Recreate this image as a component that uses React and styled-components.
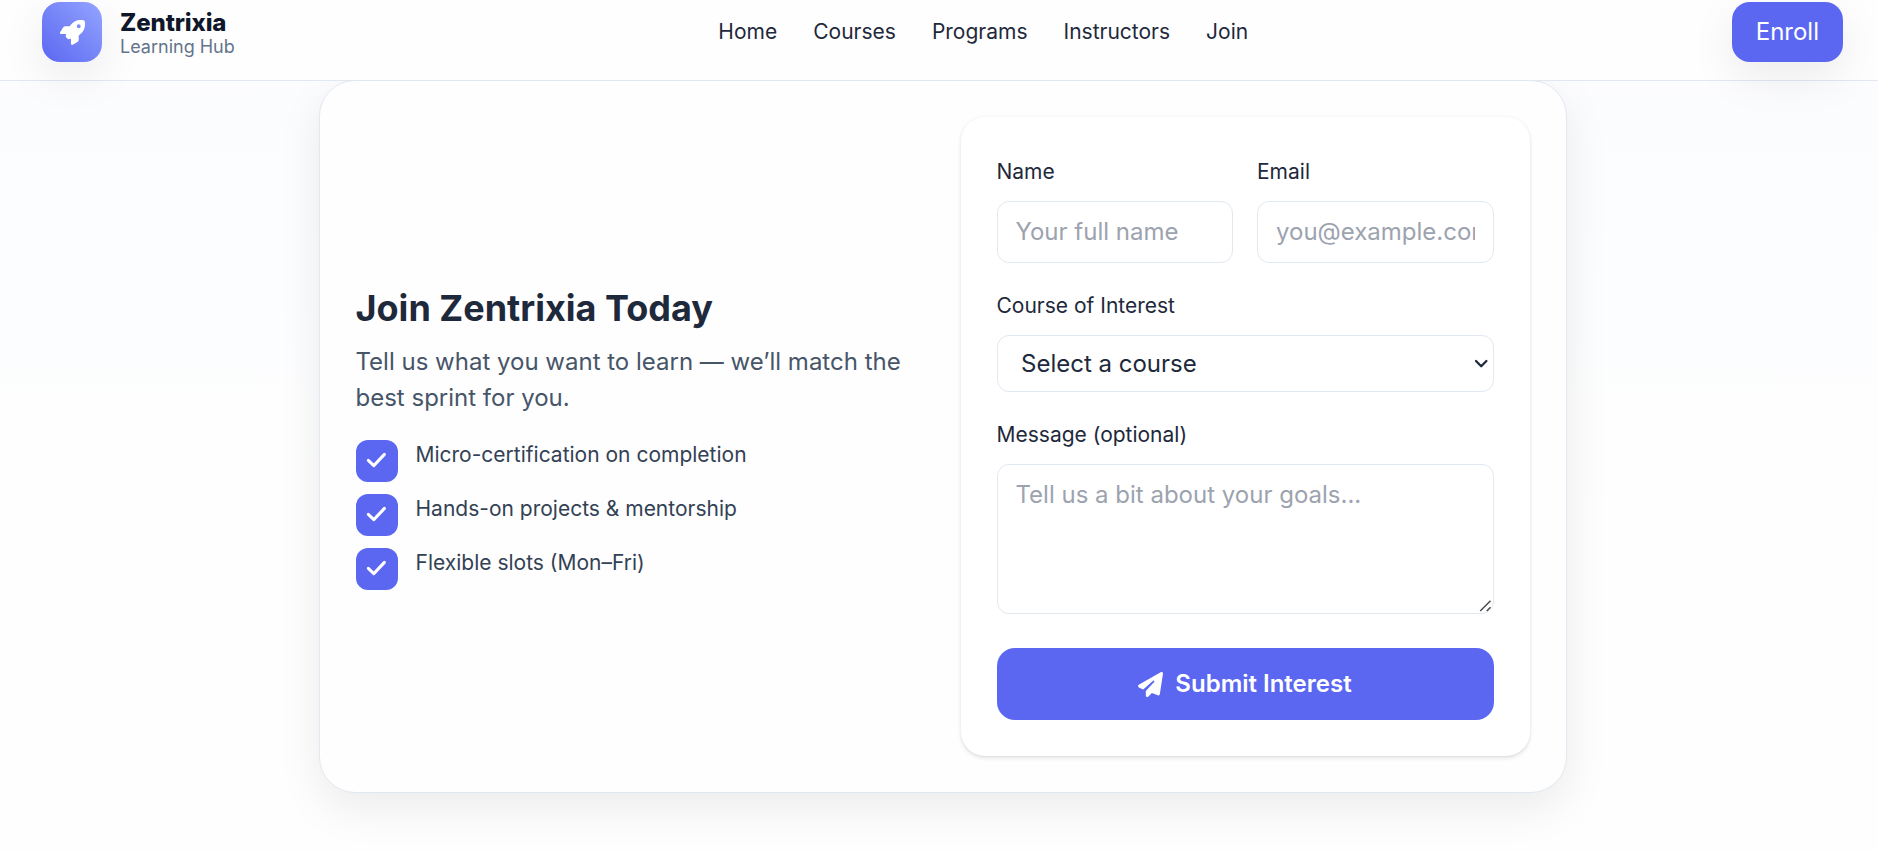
import React from "react";
import styled, { createGlobalStyle } from "styled-components";
import { FaPaperPlane, FaRocket } from "react-icons/fa6";

const GlobalStyle = createGlobalStyle`
  *, *::before, *::after { box-sizing: border-box; }
  html { font-size: 24px; }
  body {
    margin: 0;
    height: 850px;
    overflow: hidden;
    font-family: Inter, "Liberation Sans", sans-serif;
    line-height: 1.5;
    color: #1e293b;
    background: linear-gradient(180deg, #fcfcff 0%, #fcfdff 25%, #fefefe 60%, #fefefe 100%);
  }
  h2, p, ul { margin: 0; padding: 0; }
  ul { list-style: none; }
  input, select, textarea, button { font: inherit; color: inherit; margin: 0; }
`;

const Header = styled.header`
  position: relative;
  z-index: 2;
  display: flex;
  align-items: center;
  justify-content: space-between;
  height: 81px;
  padding: 2px 35px 18px 42px;
  background: #fefefe;
  border-bottom: 1px solid #e2e8f0;
`;

const Brand = styled.a`
  display: flex;
  align-items: center;
  gap: 18px;
`;

const Logo = styled.span`
  display: grid;
  place-items: center;
  width: 60px;
  height: 60px;
  border-radius: 18px;
  color: #fff;
  background: linear-gradient(45deg, #5b67f1, #93a4ff);
  box-shadow: 0 15px 45px rgba(2, 6, 23, 0.08);
`;

const BrandText = styled.span`
  display: flex;
  flex-direction: column;
  padding-top: 6px;
`;

const BrandName = styled.span`
  font-size: 24px;
  line-height: 24px;
  font-weight: 800;
  letter-spacing: -0.1px;
  color: #0f172a;
`;

const BrandTag = styled.span`
  font-size: 18px;
  line-height: 24px;
  color: #64748b;
`;

const Nav = styled.nav`
  display: flex;
  gap: 36px;
  font-size: 21px;
  line-height: 30px;
`;

const EnrollButton = styled.button`
  height: 60px;
  padding: 0 24px;
  border: 0;
  border-radius: 18px;
  color: #fff;
  background: #5b67f1;
  box-shadow: 0 15px 45px rgba(2, 6, 23, 0.08);
`;

const Card = styled.section`
  display: grid;
  grid-template-columns: 1fr 1fr;
  gap: 36px;
  align-items: center;
  width: 1248px;
  height: 713px;
  margin: -1px 0 0 318.5px;
  padding: 36px;
  border: 1px solid #e2e8f0;
  border-radius: 36px;
  background: #fefefe;
  box-shadow: 0 15px 45px rgba(2, 6, 23, 0.08);
`;

const Title = styled.h2`
  font-size: 36px;
  line-height: 48px;
  font-weight: 700;
`;

const Lead = styled.p`
  margin-top: 12px;
  color: #475569;
`;

const Benefits = styled.ul`
  display: grid;
  gap: 12px;
  margin-top: 24px;
  font-size: 21px;
  line-height: 30px;
  color: #334155;
`;

const Benefit = styled.li`
  display: flex;
  align-items: flex-start;
  gap: 18px;
`;

const Tick = styled.span`
  display: block;
  width: 42px;
  height: 42px;
  border-radius: 12px;
  background: #5b67f1;

  svg { display: block; }
`;

const Form = styled.form`
  display: grid;
  gap: 24px;
  padding: 36px;
  border-radius: 24px;
  background: #fff;
  box-shadow: 0 1.5px 4.5px rgba(0, 0, 0, 0.1), 0 1.5px 3px -1.5px rgba(0, 0, 0, 0.1);
`;

const FieldRow = styled.div`
  display: grid;
  grid-template-columns: 1fr 1fr;
  gap: 24px;
`;

const Field = styled.div`
  min-width: 0;
`;

const Label = styled.label`
  display: block;
  margin-bottom: 11px;
  padding-top: 1px;
  font-size: 21px;
  line-height: 36px;
`;

const Control = styled.div`
  position: relative;
`;

const Input = styled.input`
  display: block;
  width: 100%;
  height: 62px;
  padding: 11px 18px 13px;
  border: 1px solid #e2e8f0;
  border-radius: 12px;
  background: #fff;
  &::placeholder { color: #9ca3af; }
`;

const Select = styled.select`
  display: block;
  width: 100%;
  height: 57px;
  padding: 0 48px 0 23.5px;
  border: 1px solid #e2e8f0;
  border-radius: 12px;
  background: #fff;
  appearance: none;
`;

const Chevron = styled.svg`
  position: absolute;
  top: 22px;
  right: 5px;
  pointer-events: none;
`;

const TextArea = styled.textarea`
  display: block;
  width: 100%;
  height: 150px;
  margin-bottom: 10px;
  padding: 12px 18px;
  border: 1px solid #e2e8f0;
  border-radius: 12px;
  background: #fff;
  resize: none;
  &::placeholder { color: #9ca3af; }
`;

const Grip = styled.svg`
  position: absolute;
  right: 2px;
  bottom: 1px;
  pointer-events: none;
`;

const SubmitButton = styled.button`
  display: flex;
  align-items: center;
  justify-content: center;
  gap: 12px;
  height: 72px;
  border: 0;
  border-radius: 18px;
  font-weight: 600;
  color: #fff;
  background: #5b67f1;
`;

const links = ["Home", "Courses", "Programs", "Instructors", "Join"];
const benefits = [
  "Micro-certification on completion",
  "Hands-on projects & mentorship",
  "Flexible slots (Mon–Fri)",
];

function CheckMark() {
  return (
    <svg width="42" height="42" fill="none" stroke="#fff" strokeWidth="3" strokeLinecap="round" strokeLinejoin="round">
      <path d="M12.3 20.3l5.5 5.3L28.4 14.4" />
    </svg>
  );
}

export default function App() {
  return (
    <>
      <GlobalStyle />
      <Header>
        <Brand>
          <Logo><FaRocket size={25} /></Logo>
          <BrandText>
            <BrandName>Zentrixia</BrandName>
            <BrandTag>Learning Hub</BrandTag>
          </BrandText>
        </Brand>
        <Nav>{links.map((l) => <a key={l}>{l}</a>)}</Nav>
        <EnrollButton>Enroll</EnrollButton>
      </Header>
      <Card>
        <div>
          <Title>Join Zentrixia Today</Title>
          <Lead>Tell us what you want to learn — we’ll match the best sprint for you.</Lead>
          <Benefits>
            {benefits.map((b) => (
              <Benefit key={b}>
                <Tick><CheckMark /></Tick>
                <span>{b}</span>
              </Benefit>
            ))}
          </Benefits>
        </div>
        <Form onSubmit={(e) => e.preventDefault()}>
          <FieldRow>
            <Field>
              <Label htmlFor="name">Name</Label>
              <Input id="name" placeholder="Your full name" />
            </Field>
            <Field>
              <Label htmlFor="email">Email</Label>
              <Input id="email" type="email" placeholder="you@example.com" />
            </Field>
          </FieldRow>
          <Field>
            <Label htmlFor="course">Course of Interest</Label>
            <Control>
              <Select id="course"><option>Select a course</option></Select>
              <Chevron width="16" height="14" fill="none" stroke="#1e293b" strokeWidth="2.3" strokeLinecap="round" strokeLinejoin="round">
                <path d="M3 4l5.2 5.3L13.4 4" />
              </Chevron>
            </Control>
          </Field>
          <Field>
            <Label htmlFor="message">Message (optional)</Label>
            <Control>
              <TextArea id="message" placeholder="Tell us a bit about your goals..." />
              <Grip width="13" height="13" fill="none" stroke="#4b4b4b" strokeWidth="1.5">
                <path d="M1.2 11L11.5 0.8M7.8 11L11.5 7.2" />
              </Grip>
            </Control>
          </Field>
          <SubmitButton type="submit"><FaPaperPlane size={25} />Submit Interest</SubmitButton>
        </Form>
      </Card>
    </>
  );
}
